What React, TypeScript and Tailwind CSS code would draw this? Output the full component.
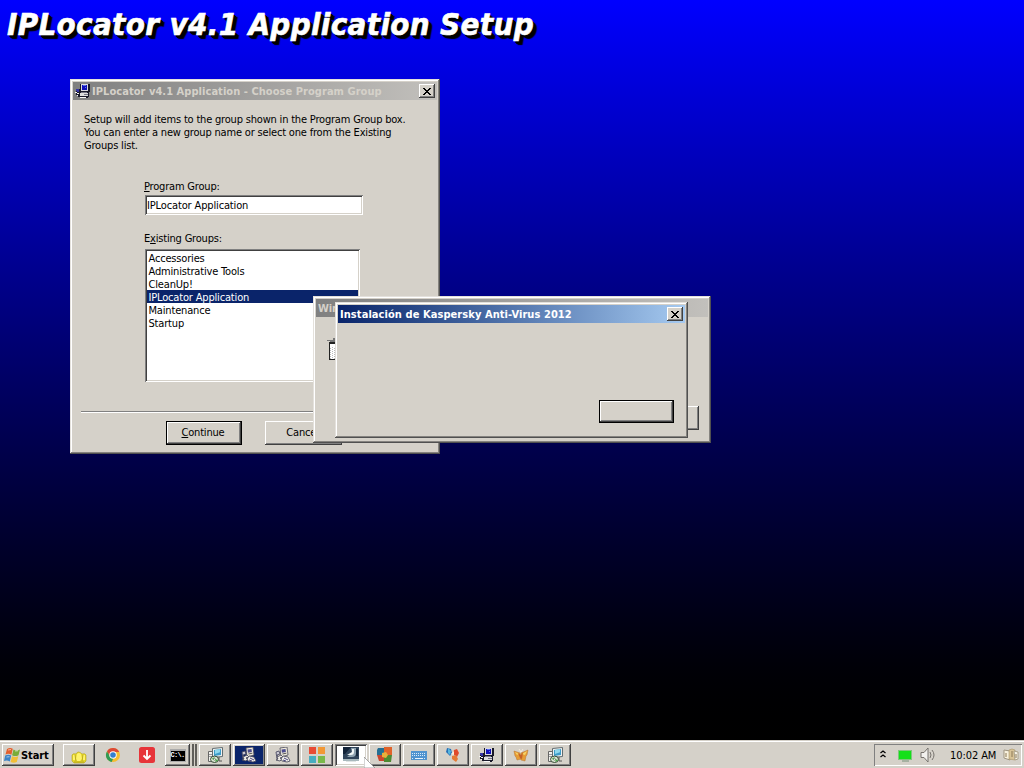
import type { ReactNode } from 'react';
import clsx from 'clsx';

const raised = 'shadow-[inset_-1px_-1px_0_#404040,inset_1px_1px_0_#ffffff,inset_-2px_-2px_0_#808080]';
const windowFrame = 'bg-[#d5d1c9] shadow-[inset_-1px_-1px_0_#505050,inset_1px_1px_0_#e4e1dc,inset_-2px_-2px_0_#85837f,inset_2px_2px_0_#ffffff]';
const sunken = 'shadow-[inset_1px_1px_0_#808080,inset_-1px_-1px_0_#ffffff,inset_2px_2px_0_#404040,inset_-2px_-2px_0_#d5d1c9]';

const groups = [
  'Accessories',
  'Administrative Tools',
  'CleanUp!',
  'IPLocator Application',
  'Maintenance',
  'Startup',
];

function SetupIcon({ className = 'size-4' }: { className?: string }) {
  return (
    <svg className={className} viewBox="0 0 16 16" shapeRendering="crispEdges">
      <path d="M5 1h9l1 1v6l-1 2v3l-2 2H5l-1-1H3v-2H1V7h2V6h2z" fill="#181828" />
      <path d="M6 1h7v7H6z" fill="#d9d9df" />
      <path d="M7 2h5v5H7z" fill="#1010b8" />
      <path d="M8 2h3v1H8zM10 4h1v1h-1z" fill="#5c72ef" />
      <path d="M1 6h3v3H2V8H1z" fill="#3434a7" />
      <path d="M5 10h8v3H5z" fill="#dedede" />
      <path d="M0 9h2v1H0zM2 10h2v1H2zM2 12h1v1H2zM5 14h6v1H5z" fill="#f7f7f7" />
      <path d="M6 9h6v1H6zM9 11h4v1H9z" fill="#777788" />
    </svg>
  );
}

function InstallerIcon() {
  return (
    <svg className="size-4" viewBox="0 0 16 16">
      <path d="M1.5 4.5h4v10h-4z" fill="#f2f2ee" stroke="#666" />
      <path d="M2 7.5h3M2 9.5h3" stroke="#999" />
      <path d="M5.5 1.5 15.5.5v9l-10 1z" fill="#f0f0f0" stroke="#626d70" />
      <path d="m7 3 7-1v6l-7 1z" fill="#3c9cc8" />
      <path d="m8 3 5-.7v3L8 7z" fill="#8ed8ed" />
      <path d="M12 10v4h3" stroke="#555" fill="none" />
      <ellipse cx="7.5" cy="12.3" rx="4" ry="3.2" fill="#e0ead7" stroke="#344934" />
      <path d="m4.5 12 3-2v2l4 1-3 2v-2z" fill="#49a246" />
      <circle cx="7.5" cy="12.3" r="1" fill="#fff" stroke="#355035" strokeWidth=".5" />
    </svg>
  );
}

function WizardIcon() {
  return (
    <svg className="size-4" viewBox="0 0 16 16">
      <path d="m5 1 7-1 1 8-7 2z" fill="#eeeadd" stroke="#4a4a58" strokeWidth=".8" />
      <path d="m6.5 2.4 4-.5.4 3-4 .8z" fill="#4c4c8d" />
      <path d="m7.4 7 4-.8" stroke="#555" />
      <path d="m1 5 3-1 1 3-3 1 2 3-2 1z" fill="#c9c8d2" stroke="#41415a" strokeWidth=".8" />
      <path d="m2 10 4-2 2 2-3 1 2 1-2 2-4-1 2-1z" fill="#eeebe4" stroke="#3e3e51" strokeWidth=".8" />
      <path d="m8 9 5 1 2 4-3 1-5-1-1-2z" fill="#f0eee8" stroke="#444458" strokeWidth=".8" />
      <path d="m9 11 4 2m-5 0 3 1" stroke="#4a477e" />
    </svg>
  );
}

function WindowsFlag() {
  return (
    <svg className="size-[17px]" viewBox="0 0 17 17">
      <path d="M3 2Q6 0 8.8 1.8L7.4 7.7Q4.5 6 1.5 7.5z" fill="#e45f2c" />
      <path d="M9.5 2.5q3 1.8 6.5 0L14.5 8.2q-3 1.8-6.4 0z" fill="#79ac38" />
      <path d="M1.2 8.5Q4.5 7 7.2 8.6l-1.4 5.8Q3 12.8 0 14z" fill="#3c83c6" />
      <path d="M8 9.2q3.3 1.6 6.3 0l-1.5 5.8q-3 1.6-6.2 0z" fill="#f2bf36" />
      <path d="m4 3 3-.5M2.5 10l3-.3M11 4l3-.2" stroke="#fff" strokeOpacity=".55" />
    </svg>
  );
}

function FolderIcon() {
  return (
    <svg className="mt-[3px] size-4" viewBox="0 0 16 16">
      <path d="M1 6q1-2 4-1 2-4 6 0 3-1 4 1v6l-2 2H3l-2-2z" fill="#e7d629" stroke="#b1a51e" strokeWidth=".6" />
      <path d="M2 6h2v5H2zM6 5q2-2 4 0l1 5-2 2H6l-1-2zM12 6h2v5h-2z" fill="#fff36c" />
      <path d="m4 6 1 6M12 6l-1 6M3 13h10" stroke="#a7991c" strokeWidth=".7" />
    </svg>
  );
}

function ChromeIcon() {
  return (
    <svg className="size-4" viewBox="0 0 16 16">
      <circle cx="8" cy="8" r="7" fill="#f4bd31" />
      <path d="M2 4.4A7 7 0 0 1 14.2 5H8L5.2 9.5z" fill="#dc4937" />
      <path d="M2 4.4 5.3 9.8 8.4 11 6.7 15A7 7 0 0 1 2 4.4z" fill="#329b55" />
      <circle cx="8" cy="8" r="3.7" fill="#fff" />
      <circle cx="8" cy="8" r="2.8" fill="#327fd0" />
    </svg>
  );
}

function DownloadIcon() {
  return (
    <svg className="size-4" viewBox="0 0 16 16">
      <rect width="16" height="16" rx="2.5" fill="#e73439" />
      <path d="M8 3v9M4.5 8.5 8 12l3.5-3.5" fill="none" stroke="#fff" strokeWidth="1.8" />
    </svg>
  );
}

function TilesIcon() {
  return (
    <svg className="size-4" viewBox="0 0 16 16">
      <path d="M0 0h7v7H0z" fill="#e94b34" />
      <path d="M9 0h7v7H9z" fill="#f29835" />
      <path d="M0 9h7v7H0z" fill="#47adc0" />
      <path d="M9 9h7v7H9z" fill="#79b94a" />
    </svg>
  );
}

function ScreenIcon() {
  return (
    <svg className="size-4" viewBox="0 0 16 16">
      <path d="M0 0h16v12H0z" fill="#30445a" />
      <path d="M0 0h8L2 7H0z" fill="#132338" />
      <path d="M8 1h5v5q0 4-4 4H4l5-4z" fill="#8fa3b0" />
      <path d="M9 2h2v3q0 3-3 3H4l5-3z" fill="#f1f6f6" />
      <path d="M13 2h2v7h-2z" fill="#15283d" />
      <path d="M0 12h16v2H0z" fill="#a9b9bd" />
      <path d="M3 14h10v1H3z" fill="#dfe5e4" />
    </svg>
  );
}

function BlocksIcon() {
  return (
    <svg className="size-4" viewBox="0 0 16 16">
      <path d="M1 1h6v7H0V3z" fill="#256f94" />
      <path d="M7 0h8v8H7z" fill="#e0632a" />
      <path d="M0 8h7v6H2z" fill="#c9452e" />
      <path d="M7 8h8l-1 7H7z" fill="#4c8a32" />
      <path d="m5 6 4-1 2 3-2 3-4-1z" fill="#e7b03a" />
    </svg>
  );
}

function KeyboardIcon() {
  return (
    <svg className="size-4" viewBox="0 0 16 16" shapeRendering="crispEdges">
      <path d="M0 4h16v9H0z" fill="#4f93cf" />
      <path d="M1 6h14M1 8h14M1 11h2M5 11h6M13 11h2" stroke="#d7eafa" strokeDasharray="1 1" />
      <path d="M4 11h8" stroke="#e8f3fc" />
    </svg>
  );
}

function PinsIcon() {
  return (
    <svg className="size-4" viewBox="0 0 16 16">
      <path d="m2 1-1 4 4 4 2-3-1-4z" fill="#2870b7" />
      <path d="m3 1 3 3-1 4-2-2z" fill="#57b6dd" />
      <path d="m9 3 3-1 2 4-2 4-4-3z" fill="#df4a2b" />
      <path d="m7 9 4-1 2 4-2 3-4-3z" fill="#e57a34" />
      <path d="m6 7 3-3v4z" fill="#faf0db" />
    </svg>
  );
}

function ButterflyIcon() {
  return (
    <svg className="size-4" viewBox="0 0 16 16">
      <path d="m1 4 6 2 1 6-4 1-1-3-1-1zM15 3 8 6v7l4 1 1-5 1-1z" fill="#e69c36" stroke="#b97432" strokeWidth=".5" />
      <path d="m2 5 4 2-2 1zM14 4 9 7l3 1z" fill="#f5d66a" />
      <path d="m5 6 3 2 2-3-1 7-2-1z" fill="#c46128" />
      <path d="m6 2 2 3 2-3" fill="none" stroke="#f6eddf" />
    </svg>
  );
}

function CommandIcon() {
  return (
    <span className="flex h-[13px] w-4 items-center justify-center border border-t-2 border-[#aaa] bg-black font-['Liberation_Mono',monospace] text-[7px] leading-none font-bold tracking-[-0.7px] text-white">
      C:\.
    </span>
  );
}

function CloseButton() {
  return (
    <button className={`flex h-[14px] w-4 shrink-0 items-center justify-center bg-[#d5d1c9] ${raised}`}>
      <svg className="mr-px h-[7px] w-2" viewBox="0 0 8 7" shapeRendering="crispEdges">
        <path d="M0 0h2v1h1v1h2V1h1V0h2v1H7v1H6v1H5v1h1v1h1v1h1v1H6V6H5V5H3v1H2v1H0V6h1V5h1V4h1V3H2V2H1V1H0z" fill="#000" />
      </svg>
    </button>
  );
}

function DefaultButton({ className, children }: { className: string; children?: ReactNode }) {
  return (
    <button className={clsx('border border-black bg-[#d5d1c9] text-center', raised, className)}>
      {children}
    </button>
  );
}

function ProgramGroupWindow() {
  return (
    <section className={`absolute top-[79px] left-[70px] flex h-[375px] w-[370px] flex-col p-[3px] ${windowFrame}`}>
      <header className="flex h-[18px] shrink-0 items-center bg-linear-to-r from-[#808080] to-[#c2c0bc] pr-[2px] pl-[2px] text-[#d5d1c9]">
        <SetupIcon className="size-4 shrink-0" />
        <h2 className="ml-px grow pt-[2px] text-[11px] font-bold whitespace-nowrap tracking-[0.05px]">
          IPLocator v4.1 Application - Choose Program Group
        </h2>
        <CloseButton />
      </header>
      <div className="px-[11px] pt-[13px]">
        <p className="leading-[13px] whitespace-nowrap">
          Setup will add items to the group shown in the Program Group box.<br />
          <span className="tracking-[-0.18px]">You can enter a new group name or select one from the Existing</span><br />
          Groups list.
        </p>
        <div className="mt-[28px] ml-[60px] w-[218px]">
          <label className="block h-[15px] leading-[13px]"><u>P</u>rogram Group:</label>
          <input className={`ml-px block h-5 w-[218px] bg-white px-[2px] tracking-[-0.14px] outline-none ${sunken}`} defaultValue="IPLocator Application" />
          <label className="mt-[16px] block h-[18px] leading-[16px]">E<u>x</u>isting Groups:</label>
          <ul className={`ml-px h-[133px] w-[215px] bg-white p-[2px] tracking-[-0.17px] ${sunken}`}>
            {groups.map(group => (
              <li key={group} className={clsx('h-[13px] pl-[1.5px] leading-[15px]', group === 'IPLocator Application' && 'bg-[#0a246a] text-white')}>
                {group}
              </li>
            ))}
          </ul>
        </div>
      </div>
      <div className="mx-2 mt-[29px] border-t border-b border-t-[#808080] border-b-white" />
      <div className="mt-[8px] flex gap-[23px] pl-[93px]">
        <DefaultButton className="h-6 w-[76px] pr-[2px]"><u>C</u>ontinue</DefaultButton>
        <button className={`h-6 w-[77px] pr-[2px] ${raised}`}>Cancel</button>
      </div>
    </section>
  );
}

function InstallerWindow() {
  return (
    <section className={`absolute top-[296px] left-[313px] flex h-[147px] w-[398px] flex-col p-[3px] ${windowFrame}`}>
      <header className="h-[18px] bg-linear-to-r from-[#808080] to-[#c2c0bc] pl-[2px] text-[11px] leading-[19px] font-bold tracking-[-0.1px] text-[#d5d1c9]">
        Win
      </header>
      <svg className="mt-[21px] ml-[11px] h-6 w-8" viewBox="0 0 32 24" shapeRendering="crispEdges">
        <path d="M2 4h30v18H2z" fill="#222" />
        <path d="M3 6h28v15H3z" fill="#fff" />
        <path d="M0 2h8v1H0zM3 3h8v1H3zM6 0h4v2H6z" fill="#777" />
        <path d="M3.5 10v11M5.5 9v12M7.5 10v11" stroke="#bbb" strokeDasharray="1 1" />
      </svg>
      <button className={`mt-auto mr-[9px] mb-[10px] h-6 w-[77px] self-end ${raised}`} />
    </section>
  );
}

function KasperskyWindow() {
  return (
    <section className={`absolute top-[302px] left-[335px] flex h-[136px] w-[353px] flex-col p-[3px] ${windowFrame}`}>
      <header className="flex h-[18px] items-center bg-linear-to-r from-[#0a246a] to-[#a6caf0] pr-[2px] pl-[2px] text-white">
        <h2 className="grow pt-[2px] text-[11px] font-bold whitespace-nowrap tracking-[0.07px]">Instalación de Kaspersky Anti-Virus 2012</h2>
        <CloseButton />
      </header>
      <DefaultButton className="mt-auto mr-[11px] mb-[12px] h-[23px] w-[75px] self-end" />
    </section>
  );
}

const tasks = [
  { name: 'installer', icon: <InstallerIcon /> },
  { name: 'wizard-selected', icon: <WizardIcon />, selected: true },
  { name: 'wizard', icon: <WizardIcon /> },
  { name: 'tiles', icon: <TilesIcon /> },
  { name: 'screen', icon: <ScreenIcon />, active: true },
  { name: 'blocks', icon: <BlocksIcon /> },
  { name: 'keyboard', icon: <KeyboardIcon /> },
  { name: 'pins', icon: <PinsIcon /> },
  { name: 'setup', icon: <SetupIcon /> },
  { name: 'butterfly', icon: <ButterflyIcon /> },
  { name: 'installer-two', icon: <InstallerIcon /> },
];

function Taskbar() {
  return (
    <footer className="flex h-7 items-start border-t border-[#d5d1c9] bg-[#d5d1c9] pt-[3px] pr-[2px] pl-[2px] shadow-[inset_0_1px_0_#fff]">
      <button className={`flex h-[22px] w-[52px] items-center pl-[2px] text-[11px] font-bold tracking-[-0.1px] ${raised}`}>
        <WindowsFlag />
        <span className="pt-[2px]">Start</span>
      </button>
      <button className={`ml-[9px] flex h-[22px] w-8 items-center justify-center ${raised}`}><FolderIcon /></button>
      <button className="ml-[10px] flex h-[22px] w-4 items-center"><ChromeIcon /></button>
      <button className="ml-[18px] flex h-[22px] w-4 items-center"><DownloadIcon /></button>
      <div className="ml-[10px] flex h-[22px] w-[32px]">
        <button className={`flex w-[25px] items-center justify-center ${raised}`}><CommandIcon /></button>
        <span className="w-1 border-r-2 border-[#605e5a]" />
        <span className="w-[3px] border-r-2 border-[#605e5a]" />
      </div>
      <nav className="ml-[2px] flex gap-[2px]">
        {tasks.map(task => (
          <button key={task.name} className={clsx('flex h-[22px] w-8 p-[2px]', task.active ? `bg-white ${sunken}` : raised)}>
            <span className={clsx('flex h-full w-full items-center justify-center', task.selected && 'bg-[#0a246a]')}>{task.icon}</span>
          </button>
        ))}
      </nav>
      <div className="ml-auto flex h-[22px] w-[148px] items-center pl-[5px] shadow-[inset_1px_1px_0_#808080,inset_-1px_-1px_0_#fff]">
        <svg className="mb-[2px] h-2 w-[8px]" viewBox="0 0 8 8"><path d="m1.5 3 2.5-2 2.5 2m-5 4L4 5l2.5 2" fill="none" stroke="#000" strokeWidth="1.3" /></svg>
        <svg className="ml-[10px] h-[13px] w-4" viewBox="0 0 16 13">
          <rect x="1.5" y="1.5" width="13" height="9" fill="#14e019" stroke="#7fc77c" />
          <path d="M5 12h7" stroke="#77917a" />
        </svg>
        <svg className="ml-[7px] size-4" viewBox="0 0 16 16" fill="none">
          <path d="M1 5.5h3L8 1v14l-4-4.5H1z" fill="#f2f1ee" stroke="#77736e" />
          <path d="M10 5q2 3 0 6m2-8q4 5 0 10" stroke="#77736e" />
        </svg>
        <time className="ml-[14px] pt-[2px] whitespace-nowrap tracking-[-0.08px]">10:02 AM</time>
        <svg className="ml-[7px] size-4 shrink-0" viewBox="0 0 16 16">
          <path d="m1 3 6 1v9l-6-2z" fill="#f8f1dd" stroke="#9f9581" />
          <path d="m6 3 3-1 3 1v10l-6-1z" fill="#d8c397" stroke="#aa9464" strokeWidth=".6" />
          <path d="m11 4 4 1v7l-3 1z" fill="#f6f2e6" stroke="#aaa089" />
          <path d="M3 6v4m6-6v6m4-3v4" stroke="#8b7856" />
        </svg>
      </div>
    </footer>
  );
}

export default function App() {
  return (
    <main className="relative flex h-[768px] w-[1024px] cursor-default flex-col overflow-hidden bg-linear-to-b from-[#0000ff] to-black font-['DejaVu_Sans_Condensed','DejaVu_Sans',sans-serif] text-[11px] tracking-[-0.19px] text-black">
      <h1 className="grow pt-[3px] pl-[7px] text-[31px] leading-[42px] font-bold tracking-[0.34px] whitespace-nowrap text-white italic [-webkit-text-stroke:0.6px_#fff] [text-shadow:2px_2px_0_#000,3px_3px_0_#000,4px_4px_1px_#000]">
        IPLocator v4.1 Application Setup
      </h1>
      <ProgramGroupWindow />
      <InstallerWindow />
      <KasperskyWindow />
      <Taskbar />
      <svg className="absolute top-[757px] left-[364px] h-[11px] w-[11px]" viewBox="0 0 11 11">
        <path d="M0 0v11h11z" fill="#fff" stroke="#888" strokeWidth=".7" />
      </svg>
    </main>
  );
}
